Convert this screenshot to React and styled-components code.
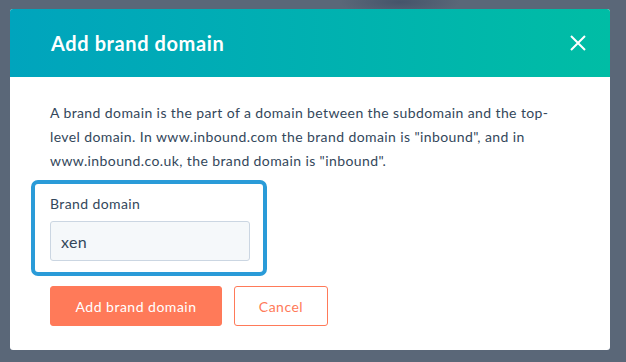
import React from 'react'
import styled, { createGlobalStyle } from 'styled-components'

const GlobalStyle = createGlobalStyle`
  html, body {
    margin: 0;
    padding: 0;
  }
  body {
    background: radial-gradient(ellipse 60px 14px at 400px 2px, #45546a, transparent), #5a6778;
    font-family: Lato, "Open Sans", sans-serif;
    color: #33475b;
  }
`

const Backdrop = styled.div`
  padding: 9px 16px 12px 10px;
`

const Modal = styled.div`
  width: 600px;
  background: #fff;
  border-radius: 3px;
  overflow: hidden;
`

const Header = styled.div`
  height: 68px;
  display: flex;
  align-items: center;
  justify-content: space-between;
  padding: 0 24px 0 41px;
  background: linear-gradient(to right, #00a4bd, #00bda5);
`

const Title = styled.h1`
  margin: 0;
  font-size: 20px;
  font-weight: 700;
  letter-spacing: 0.6px;
  color: #fff;
`

const CloseButton = styled.button`
  display: flex;
  padding: 0;
  border: 0;
  background: none;
  cursor: pointer;
`

const Body = styled.div`
  padding: 24px 40px 24px 40px;
`

const Description = styled.p`
  margin: 0;
  font-size: 14px;
  line-height: 24px;
  letter-spacing: 0.4px;
  color: #33475b;
`

const Highlight = styled.div`
  width: fit-content;
  margin: 7px 0 10px -19px;
  padding: 10px 13px 11px 15px;
  border: 4px solid #2a9bd8;
  border-radius: 7px;
`

const Label = styled.label`
  display: block;
  font-size: 14px;
  line-height: 20px;
  letter-spacing: 0.4px;
  margin-bottom: 7px;
  color: #33475b;
`

const Input = styled.input`
  box-sizing: border-box;
  display: block;
  width: 200px;
  height: 40px;
  padding: 0 10px;
  background: #f5f8fa;
  border: 1px solid #cbd6e2;
  border-radius: 3px;
  font-family: inherit;
  font-size: 16px;
  letter-spacing: 0.4px;
  color: #33475b;
  outline: none;
`

const Actions = styled.div`
  display: flex;
  gap: 12px;
`

const Button = styled.button`
  box-sizing: border-box;
  height: 40px;
  width: ${p => p.$width}px;
  border-radius: 3px;
  border: 1px solid #ff7a59;
  background: ${p => (p.$primary ? '#ff7a59' : '#fff')};
  color: ${p => (p.$primary ? '#fff' : '#ff7a59')};
  font-family: inherit;
  font-size: 14px;
  letter-spacing: 0.5px;
  cursor: pointer;
`

const App = () => (
  <Backdrop>
    <GlobalStyle />
    <Modal>
      <Header>
        <Title>Add brand domain</Title>
        <CloseButton aria-label="Close">
          <svg width="16" height="16" viewBox="0 0 16 16">
            <path d="M1 1L15 15M15 1L1 15" stroke="#fff" strokeWidth="2" />
          </svg>
        </CloseButton>
      </Header>
      <Body>
        <Description>
          A brand domain is the part of a domain between the subdomain and the top-level domain. In
          www.inbound.com the brand domain is "inbound", and in www.inbound.co.uk, the brand domain
          is "inbound".
        </Description>
        <Highlight>
          <Label>Brand domain</Label>
          <Input defaultValue="xen" />
        </Highlight>
        <Actions>
          <Button $primary $width={172}>Add brand domain</Button>
          <Button $width={94}>Cancel</Button>
        </Actions>
      </Body>
    </Modal>
  </Backdrop>
)

export default App
